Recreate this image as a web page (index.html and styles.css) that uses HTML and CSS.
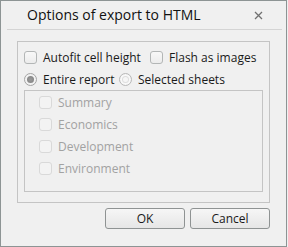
FILE: index.html
```html
<html>
<head>
	<title>Options of export to HTML</title>
	<link rel="stylesheet" href="styles.css">
</head>
<body>
	<div class="dialog">
		<div class="header">
			<span class="title">Options of export to HTML</span>
			<svg class="close" width="9" height="9" viewBox="0 0 9 9">
				<path d="M1 1 L8 8 M8 1 L1 8" stroke="#707070" stroke-width="1.3" fill="none"/>
			</svg>
		</div>
		<div class="content">
			<div class="group">
				<div class="row first">
					<label class="opt wide"><span class="box"></span>Autofit cell height</label>
					<label class="opt"><span class="box"></span>Flash as images</label>
				</div>
				<div class="row second">
					<label class="opt narrow"><span class="radio on"></span>Entire report</label>
					<label class="opt"><span class="radio"></span>Selected sheets</label>
				</div>
				<div class="sheets">
					<label class="sheet"><span class="box off"></span>Summary</label>
					<label class="sheet"><span class="box off"></span>Economics</label>
					<label class="sheet"><span class="box off"></span>Development</label>
					<label class="sheet"><span class="box off"></span>Environment</label>
				</div>
			</div>
			<div class="buttons">
				<span class="btn">OK</span>
				<span class="btn">Cancel</span>
			</div>
		</div>
	</div>
</body>
</html>
```
FILE: styles.css
```css
* {
	box-sizing: border-box;
}

body{
	margin: 0;
	background: #f0f0f0;
	font-family: "Open Sans", "Noto Sans", sans-serif;
}

.dialog{
	width: 287px;
	height: 247px;
	border: 1px solid #8d9494;
	background: #f0f0f0;
}

.header{
	height: 29px;
	margin: 0 4px 0 6px;
	border-bottom: 1px solid #d4d4d4;
	display: flex;
	align-items: center;
	padding-left: 20px;
	padding-right: 19px;
}

.title{
	flex: 1;
	font-size: 14px;
	color: #111;
	padding-bottom: 1px;
}

.close{
	display: block;
}

.content{
	padding: 11px 16px 0 16px;
}

.group{
	height: 162px;
	border: 1px solid #c4c4c4;
	padding: 5px 6px 0 6px;
}

.row{
	display: flex;
	align-items: center;
}

.row.first{
	height: 21px;
}

.row.second{
	height: 22px;
}

.opt{
	display: flex;
	align-items: center;
	font-size: 12px;
	color: #1a1a1a;
}

.opt.wide{
	width: 126px;
}

.opt.narrow{
	width: 95px;
}

.box{
	width: 13px;
	height: 13px;
	border: 1px solid #b3b6b6;
	border-radius: 3px;
	background: linear-gradient(#f8f8f8, #ececec);
	margin-right: 6px;
	flex: none;
}

.box.off{
	border-color: #d9d9d9;
	background: #f3f3f3;
}

.radio{
	width: 13px;
	height: 13px;
	border: 1px solid #b8b8b8;
	border-radius: 50%;
	background: #f6f6f6;
	box-shadow: inset 0 0 0 2px #f8f8f8, inset 0 0 0 3px #dedede;
	margin-right: 6px;
	flex: none;
	display: flex;
	align-items: center;
	justify-content: center;
}

.radio.on{
	border-color: #a5a5a5;
	box-shadow: none;
	background: #f2f2f2;
}

.radio.on::after{
	content: "";
	width: 7px;
	height: 7px;
	border-radius: 50%;
	background: radial-gradient(#9a9a9a, #808080);
}

.sheets{
	height: 102px;
	border: 1px solid #c4c4c4;
	padding-left: 14px;
}

.sheet{
	display: flex;
	align-items: center;
	height: 22px;
	font-size: 12px;
	color: #a2a2a2;
}

.buttons{
	display: flex;
	justify-content: flex-end;
	gap: 5px;
	margin-top: 5px;
}

.btn{
	width: 80px;
	height: 21px;
	border: 1px solid #8f9393;
	border-radius: 3px;
	background: linear-gradient(#f6f6f6, #e6e6e6);
	display: flex;
	align-items: center;
	justify-content: center;
	font-size: 12px;
	color: #1a1a1a;
}
```
